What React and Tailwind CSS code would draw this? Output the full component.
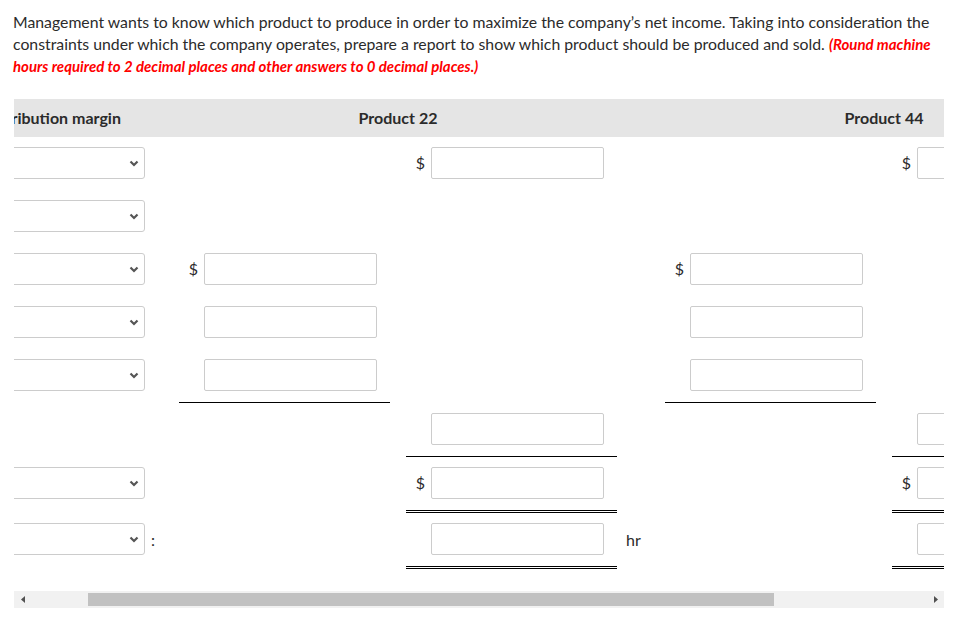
import React from 'react';

const Chevron = () => (
  <svg width="10" height="7" viewBox="0 0 10 7" className="shrink-0">
    <polyline points="1.5,1.5 5,5 8.5,1.5" fill="none" stroke="#555" strokeWidth="2.2" />
  </svg>
);

const Select = () => (
  <div className="flex h-[32px] w-full items-center justify-end rounded-[3px] border border-[#cccccc] bg-white pr-[5px]">
    <Chevron />
  </div>
);

const Field = () => (
  <div className="h-[32px] w-[173px] rounded-[2px] border border-[#cccccc] bg-white" />
);

// cell: { dollar, line: 'single' | 'double' }
const Cell = ({ cell }) => {
  const line = cell?.line === 'single'
    ? 'border-b border-black'
    : cell?.line === 'double'
      ? 'border-b-[3px] border-double border-black'
      : '';
  return (
    <div className={`w-[211px] shrink-0 pt-[10px] pb-[11px] ${line}`}>
      {cell && (
        <div className="flex h-[32px] items-center">
          <span className="w-[25px] shrink-0 pr-[6px] text-right">{cell.dollar ? '$' : ''}</span>
          <Field />
        </div>
      )}
    </div>
  );
};

const Row = ({ select = true, colon, unit, a, b, c, d }) => (
  <div className="flex items-start">
    <div className="w-[191px] shrink-0 pt-[10px] pb-[11px]">
      {select ? <Select /> : <div className="h-[32px]" />}
    </div>
    <div className="flex h-[53px] w-[34px] shrink-0 items-center pl-[6px]">{colon ? ':' : ''}</div>
    <Cell cell={a} />
    <div className="w-[16px] shrink-0" />
    <Cell cell={b} />
    <div className="flex h-[53px] w-[48px] shrink-0 items-center pl-[9px]">{unit}</div>
    <Cell cell={c} />
    <div className="w-[16px] shrink-0" />
    <Cell cell={d} />
  </div>
);

const rows = [
  { b: { dollar: true }, d: { dollar: true } },
  {},
  { a: { dollar: true }, c: { dollar: true } },
  { a: {}, c: {} },
  { a: { line: 'single' }, c: { line: 'single' } },
  { select: false, b: { line: 'single' }, d: { line: 'single' } },
  { b: { dollar: true, line: 'double' }, d: { dollar: true, line: 'double' } },
  { colon: true, unit: 'hr', b: { line: 'double' }, d: { line: 'double' } },
];

export default function App() {
  return (
    <div className="min-h-screen bg-white px-[14px] pt-[11px] text-[16px] text-[#2b2b2b]" style={{ fontFamily: 'Lato, "Open Sans", sans-serif' }}>
      <p className="-ml-px text-[15.8px] leading-[22px]">
        Management wants to know which product to produce in order to maximize the company’s net income. Taking into consideration the
        constraints under which the company operates, prepare a report to show which product should be produced and sold.{' '}
        <span className="text-[15px] font-bold italic text-[#ff0000]">
          (Round machine hours required to 2 decimal places and other answers to 0 decimal places.)
        </span>
      </p>

      <div className="mt-[22px] overflow-hidden">
        <div className="-ml-[60px] w-[1214px] pb-[22px]">
          {/* header */}
          <div className="flex h-[38px] items-center bg-[#e5e5e5] font-bold">
            <div className="w-[225px] shrink-0 whitespace-nowrap pl-[23px]">Contribution margin</div>
            <div className="w-[438px] shrink-0 text-center">Product 22</div>
            <div className="w-[48px] shrink-0" />
            <div className="w-[438px] shrink-0 text-center">Product 44</div>
          </div>
          {rows.map((r, i) => (
            <Row key={i} {...r} />
          ))}
        </div>
      </div>

      {/* horizontal scrollbar */}
      <div className="flex h-[17px] items-center bg-[#f1f1f1]">
        <div className="flex h-full w-[17px] shrink-0 items-center justify-center">
          <svg width="4" height="7" viewBox="0 0 4 7"><polygon points="4,0 4,7 0,3.5" fill="#505050" /></svg>
        </div>
        <div className="flex h-full flex-1 items-center">
          <div className="ml-[57px] h-[13px] w-[686px] bg-[#c1c1c1]" />
        </div>
        <div className="flex h-full w-[17px] shrink-0 items-center justify-center">
          <svg width="4" height="7" viewBox="0 0 4 7"><polygon points="0,0 0,7 4,3.5" fill="#505050" /></svg>
        </div>
      </div>
    </div>
  );
}
